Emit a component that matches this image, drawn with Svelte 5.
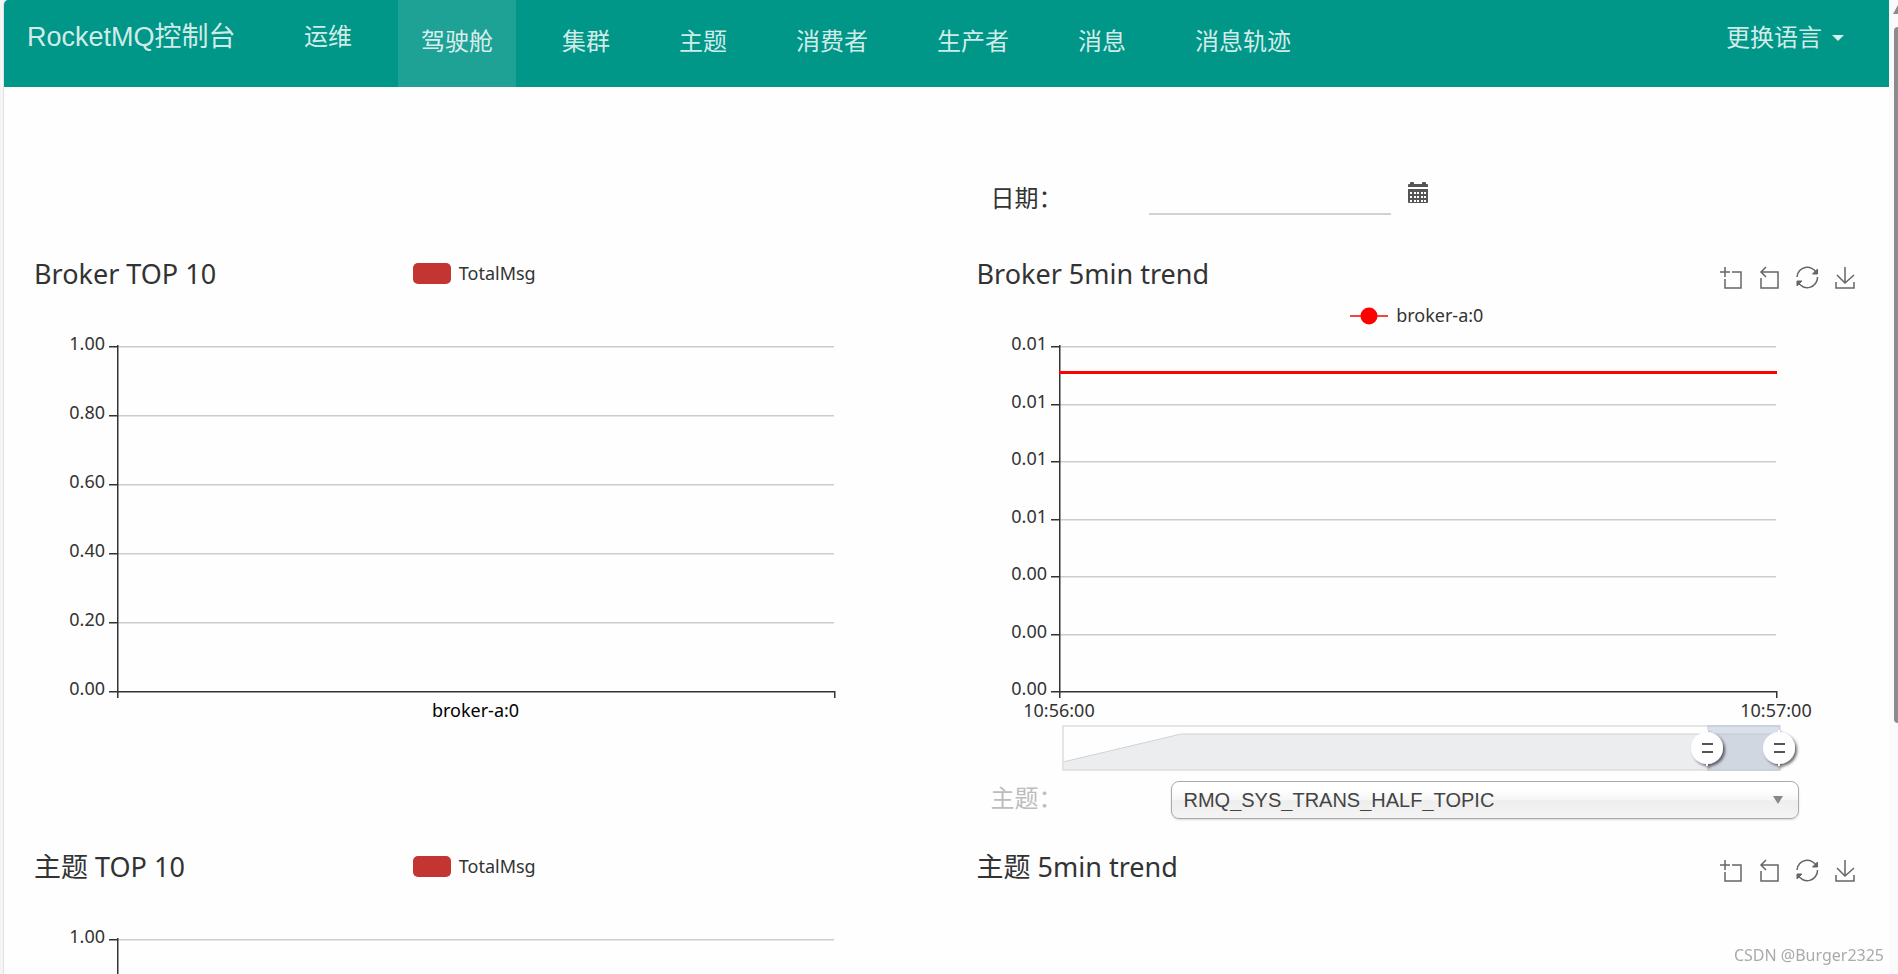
<script>
  const links = ['运维', '驾驶舱', '集群', '主题', '消费者', '生产者', '消息', '消息轨迹'];
  const active = '驾驶舱';
  const topics = ['RMQ_SYS_TRANS_HALF_TOPIC'];

  const barTicks = ['1.00', '0.80', '0.60', '0.40', '0.20', '0.00'];
  const trendTicks = ['0.01', '0.01', '0.01', '0.01', '0.00', '0.00', '0.00'];

  const top = 16;
  const bottom = 361;

  let barWidth = $state(942);
  let trendWidth = $state(942);
  let topic = $state(topics[0]);
  let date = $state('');

  const tickY = (i, count) => top + Math.round(((bottom - top) * i) / (count - 1));
  const barLeft = 113;
  const trendLeft = 112;
  const barRight = $derived(barWidth - 113);
  const trendRight = $derived(trendWidth - 114);
</script>

{#snippet axes(ticks, left, right)}
  {#each ticks as label, i}
    {@const y = tickY(i, ticks.length)}
    {#if i < ticks.length - 1}
      <rect x={left} {y} width={right - left} height="1.5" fill="#ccc" />
    {/if}
    <rect x={left - 8} {y} width="8" height="1.5" fill="#333" />
    <text class="tick" x={left - 12} y={y + 4} text-anchor="end">{label}</text>
  {/each}
  <rect x={left} y={top - 1} width="1.5" height={bottom - top + 8} fill="#333" />
  <rect x={left} y={bottom} width={right - left + 1} height="1.5" fill="#333" />
  <rect x={right} y={bottom} width="1.5" height="7" fill="#333" />
{/snippet}

{#snippet tools()}
  <div class="tools">
    <button type="button" aria-label="区域缩放">
      <svg width="24" height="24" viewBox="0 0 24 24"><path d="M1 7h10M6 2v10M13 7h9v16H6V14" /></svg>
    </button>
    <button type="button" aria-label="区域缩放还原">
      <svg width="24" height="24" viewBox="0 0 24 24"><path d="M9 2L4 7l5 5M4 7h17v16H4V13" /></svg>
    </button>
    <button type="button" aria-label="还原">
      <svg width="24" height="24" viewBox="0 0 24 24">
        <path d="M2 12A10.300 10.300 0 0 1 21.500 8M22.500 12A10.300 10.300 0 0 1 3 17" />
        <path d="M22.500 4v5h-5zM2 21v-5h5z" fill="#666" stroke-width="1" />
      </svg>
    </button>
    <button type="button" aria-label="保存为图片">
      <svg width="24" height="24" viewBox="0 0 24 24"><path d="M12 2v16M4 10l8 8 9-8M3 17v6h18v-6" /></svg>
    </button>
  </div>
{/snippet}

{#snippet handle(x)}
  <g transform="translate({x} 418)">
    <g filter="url(#knob-shadow)">
      <circle r="16" fill="#fff" />
      <path d="M-1-18h2v36h-2z" fill="#fff" />
    </g>
    <path d="M-5-4h11M-5 4h11" stroke="#555" stroke-width="2" />
  </g>
{/snippet}

{#snippet barChart(title)}
  <section class="chart">
    <header>
      <h2>{title}</h2>
      <div class="legend"><span class="swatch"></span>TotalMsg</div>
    </header>
    <svg class="plot" width="100%" height="445">
      {@render axes(barTicks, barLeft, barRight)}
      <text class="tick strong" x={(barLeft + barRight) / 2} y="387" text-anchor="middle">broker-a:0</text>
    </svg>
  </section>
{/snippet}

<div class="page">
  <div class="sheet">
    <nav class="navbar">
      <a class="brand" href="#home">RocketMQ控制台</a>
      <ul>
        {#each links as link, i}
          <li><a href="#{i}" class:raised={i === 0} class:active={link === active}>{link}</a></li>
        {/each}
      </ul>
      <button class="language" type="button">更换语言<span class="caret"></span></button>
    </nav>

    <main>
      <div class="row date-row">
        <div class="field">
          <label for="date">日期：</label>
          <input id="date" type="text" bind:value={date} />
          <button type="button" class="calendar" aria-label="选择日期">
            <svg width="22" height="22" viewBox="0 0 22 22">
              <path d="M2 2h1V1q0-1 1-1h2q1 0 1 1v1h8V1q0-1 1-1h2q1 0 1 1v1h1q1 0 1 1v2H1V3q0-1 1-1z" fill="#555" />
              <path d="M1 7h20v13q0 1-1 1H2q-1 0-1-1z" fill="#555" />
              {#each [10, 14, 18] as y}
                {#each [3, 7, 10, 14, 17] as x}
                  <rect {x} {y} width="2" height="2" fill="#fff" />
                {/each}
              {/each}
            </svg>
          </button>
        </div>
      </div>

      <div class="row">
        <div bind:clientWidth={barWidth}>{@render barChart('Broker TOP 10')}</div>
        <section class="chart" bind:clientWidth={trendWidth}>
          <header>
            <h2>Broker 5min trend</h2>
            <div class="legend below">
              <svg width="38" height="20" viewBox="0 0 38 20">
                <path d="M0 11h38" stroke="#f00" stroke-width="1.500" />
                <circle cx="19" cy="11" r="8.500" fill="#f00" />
              </svg>broker-a:0
            </div>
            {@render tools()}
          </header>
          <svg class="plot" width="100%" height="445">
            <defs>
              <filter id="knob-shadow" x="-30%" y="-30%" width="170%" height="170%">
                <feDropShadow dx="2" dy="2" stdDeviation="1.500" flood-color="#000" flood-opacity="0.6" />
              </filter>
            </defs>
            {@render axes(trendTicks, trendLeft, trendRight)}
            <rect x={trendLeft} y="41" width={trendRight - trendLeft + 1} height="3" fill="#f00" />
            <text class="tick" x={trendLeft} y="387" text-anchor="middle">10:56:00</text>
            <text class="tick" x={trendRight} y="387" text-anchor="middle">10:57:00</text>

            <path d="M{trendLeft + 4} 432l118-28H{trendRight + 4}v36H{trendLeft + 4}z" fill="#ebedef" />
            <path d="M{trendLeft + 4} 432l118-28H{trendRight + 4}" fill="none" stroke="#cfd4d9" />
            <rect x={trendLeft + 4} y="396" width={trendRight - trendLeft} height="44" fill="none" stroke="#ddd" stroke-width="1.500" />
            <rect x={trendRight - 69} y="395" width="73" height="46" fill="#a7b7cc" fill-opacity="0.4" />
            {@render handle(trendRight - 69)}
            {@render handle(trendRight + 3)}
          </svg>
        </section>
      </div>

      <div class="row topic-row">
        <div class="field">
          <label class="muted" for="topic">主题：</label>
          <div class="picker">
            <select id="topic" bind:value={topic}>
              {#each topics as name}<option>{name}</option>{/each}
            </select>
            <svg width="10" height="8" viewBox="0 0 10 8"><path d="M0 0h10L5 8z" fill="#888" /></svg>
          </div>
        </div>
      </div>

      <div class="row">
        {@render barChart('主题 TOP 10')}
        <section class="chart">
          <header>
            <h2>主题 5min trend</h2>
            {@render tools()}
          </header>
        </section>
      </div>
    </main>
  </div>

  <div class="scroll">
    <svg width="9" height="20" viewBox="0 0 9 20"><path d="M4 14l5-9v9z" fill="#8b8b8b" /></svg>
    <div class="thumb"></div>
  </div>
  <div class="mark">CSDN @Burger2325</div>
</div>

<style>
  :global(body) {
    margin: 0;
    overflow: hidden;
  }
  .page {
    position: relative;
    display: flex;
    height: 100vh;
    overflow: hidden;
    background: #f5f5f5;
    font-family: 'Liberation Sans', 'Noto Sans CJK SC', sans-serif;
    font-size: 24px;
    color: #333;
  }
  .sheet {
    flex: 1;
    min-width: 0;
    margin-left: 3px;
    border-left: 1px solid #e2e2e2;
    border-top-left-radius: 5px;
    background: #fefefe;
    overflow-x: hidden;
    overflow-y: auto;
    scrollbar-width: none;
  }
  button {
    border: 0;
    padding: 0;
    background: none;
    color: inherit;
    font: inherit;
  }
  .navbar {
    display: flex;
    align-items: flex-start;
    height: 87px;
    background: #009688;
    color: rgba(255, 255, 255, 0.84);
    white-space: nowrap;
  }
  .navbar a {
    color: inherit;
    text-decoration: none;
  }
  .brand {
    width: 254px;
    padding-left: 23px;
    font-size: 27px;
    line-height: 74px;
  }
  ul {
    display: flex;
    gap: 23px;
    margin: 0;
    padding: 0;
    list-style: none;
  }
  li a {
    display: block;
    height: 87px;
    padding: 0 23px;
    line-height: 84px;
  }
  li a.raised {
    line-height: 74px;
  }
  li a.active {
    background: rgba(255, 255, 255, 0.12);
  }
  .language {
    display: flex;
    align-items: center;
    gap: 10px;
    height: 70px;
    margin-left: auto;
    margin-right: 45px;
  }
  .caret {
    margin-top: 6px;
    border: 6px solid transparent;
    border-top-color: currentColor;
    border-bottom: 0;
  }
  .row {
    display: grid;
    grid-template-columns: 1fr 1fr;
  }
  .date-row {
    height: 163px;
  }
  .topic-row {
    height: 68px;
  }
  .field {
    grid-column: 2;
    display: flex;
    align-items: flex-start;
    padding-left: 44px;
  }
  .date-row .field {
    padding-top: 94px;
  }
  .topic-row .field {
    padding-top: 6px;
  }
  label {
    line-height: 36px;
    width: 158px;
  }
  label.muted {
    width: 180px;
    color: #bdbdbd;
  }
  #date {
    width: 242px;
    height: 34px;
    box-sizing: border-box;
    padding: 0;
    border: 0;
    border-bottom: 2px solid #d2d2d2;
    background: none;
    font: inherit;
  }
  .calendar {
    display: flex;
    margin-top: 1px;
    margin-left: 16px;
  }
  .picker {
    position: relative;
    flex: 1;
    margin-right: 90px;
  }
  select {
    display: block;
    width: 100%;
    height: 38px;
    padding: 0 12px;
    appearance: none;
    border: 1px solid #aaa;
    border-radius: 8px;
    background: linear-gradient(#fff 20%, #f6f6f6 50%, #eee 52%, #f4f4f4 100%);
    box-shadow: 0 1px 2px rgba(0, 0, 0, 0.15);
    color: #444;
    font-family: inherit;
    font-size: 20px;
  }
  .picker svg {
    position: absolute;
    right: 16px;
    top: 15px;
    pointer-events: none;
  }
  .chart {
    min-width: 0;
    font-family: 'Noto Sans', 'Noto Sans CJK SC', sans-serif;
  }
  .chart header {
    display: grid;
    grid-template-columns: 1fr auto 1fr;
    grid-template-rows: 50px 30px;
    padding: 0 32px 0 30px;
  }
  h2 {
    grid-area: 1 / 1;
    margin: 0;
    font-size: 27px;
    font-weight: 400;
    line-height: 48px;
    white-space: nowrap;
  }
  .legend {
    grid-area: 1 / 2;
    display: flex;
    align-items: center;
    gap: 8px;
    height: 46px;
    font-size: 18px;
    line-height: 24px;
  }
  .legend.below {
    grid-area: 2 / 2;
    height: 30px;
  }
  .swatch {
    width: 38px;
    height: 21px;
    border-radius: 5px;
    background: #c23531;
  }
  .tools {
    grid-area: 1 / 3;
    display: flex;
    justify-content: flex-end;
    gap: 14px;
    padding-top: 15px;
  }
  .tools button {
    display: flex;
    height: 24px;
  }
  .tools svg {
    fill: none;
    stroke: #666;
    stroke-width: 1.5;
  }
  .plot {
    display: block;
  }
  .tick {
    font-size: 18px;
    fill: #333;
  }
  .strong {
    fill: #000;
  }
  .scroll {
    width: 9px;
    background: #fafafa;
  }
  .scroll svg {
    display: block;
  }
  .thumb {
    height: 696px;
    margin: 7px 0 0 5px;
    border-radius: 5px 0 0 5px;
    background: #8b8b8b;
  }
  .mark {
    position: absolute;
    right: 14px;
    bottom: 7px;
    font-family: 'Noto Sans', sans-serif;
    font-size: 16px;
    line-height: 24px;
    color: #aaa;
  }
</style>
